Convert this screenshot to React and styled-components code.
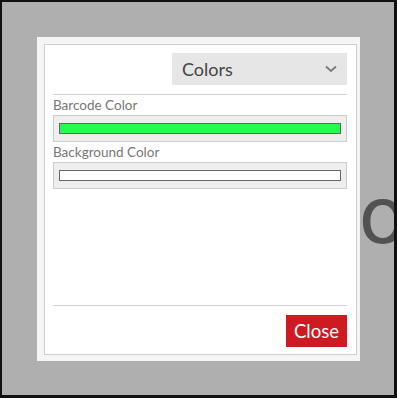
import styled, { createGlobalStyle } from "styled-components";

const GlobalStyle = createGlobalStyle`
    * { box-sizing: border-box; }
    body {
        margin: 0;
        font-family: Lato, "Open Sans", sans-serif;
    }
`;

const Page = styled.div`
    width: 397px;
    height: 398px;
    position: relative;
    overflow: hidden;
    background-color: #afafaf;
    border-style: solid;
    border-color: #111;
    border-width: 2px 3px 3px 2px;
    display: flex;
    align-items: flex-start;
    justify-content: flex-start;
    padding: 35px 0 0 35px;
`;

// big label of the page behind the dialog
const BackText = styled.div`
    position: absolute;
    left: 313px;
    top: 175px;
    font-family: "DejaVu Sans", sans-serif;
    font-size: 79px;
    color: #525252;
    filter: blur(0.7px);
    line-height: 1;
`;

const Frame = styled.div`
    position: relative;
    width: 323px;
    height: 324px;
    background-color: #f5f5f5;
    padding: 7px 3px 6px 7px;
    display: flex;
`;

const Panel = styled.div`
    flex: 1;
    background-color: #fff;
    border: 1px solid #cfcfcf;
    padding: 8px 9px 7px 8px;
    display: flex;
    flex-direction: column;
`;

const Header = styled.div`
    display: flex;
    justify-content: flex-end;
    padding-bottom: 9px;
    border-bottom: 1px solid #d0d0d0;
`;

const Select = styled.div`
    width: 175px;
    height: 32px;
    background-color: #e6e6e6;
    display: flex;
    align-items: center;
    justify-content: space-between;
    padding: 0 10px 0 10px;
    font-size: 18px;
    color: #444;
`;

const Body = styled.div`
    flex: 1;
`;

const Label = styled.div`
    font-size: 13.5px;
    line-height: 20px;
    color: #777;
`;

const Field = styled.div`
    height: 27px;
    background-color: #eee;
    border: 1px solid #cdcdcd;
    padding: 7px 5px;
`;

const Swatch = styled.div`
    height: 11px;
    background-color: ${props => props.color};
    border: 1px solid #666;
`;

const Footer = styled.div`
    display: flex;
    justify-content: flex-end;
    padding-top: 9px;
    border-top: 1px solid #d0d0d0;
`;

const CloseButton = styled.button`
    width: 61px;
    height: 32px;
    border: none;
    background-color: #ce1b21;
    color: #fff;
    font-family: Lato, "Open Sans", sans-serif;
    font-size: 18.5px;
    padding: 0;
    cursor: pointer;
`;

const Chevron = () => (
    <svg width="12" height="8" viewBox="0 0 12 8">
        <path d="M1 1.5 L6 6 L11 1.5" fill="none" stroke="#7a7a7a" strokeWidth="1.8" />
    </svg>
);

const fields = [
    { id: 1, label: "Barcode Color", color: "#22fe4f" },
    { id: 2, label: "Background Color", color: "#fff" },
];

const App = () => {
    return (
        <Page>
            <GlobalStyle />
            <BackText>co</BackText>
            <Frame>
                <Panel>
                    <Header>
                        <Select>
                            <span>Colors</span>
                            <Chevron />
                        </Select>
                    </Header>
                    <Body>
                        {fields.map(f => (
                            <div key={f.id}>
                                <Label>{f.label}</Label>
                                <Field>
                                    <Swatch color={f.color} />
                                </Field>
                            </div>
                        ))}
                    </Body>
                    <Footer>
                        <CloseButton>Close</CloseButton>
                    </Footer>
                </Panel>
            </Frame>
        </Page>
    );
};

export default App;
